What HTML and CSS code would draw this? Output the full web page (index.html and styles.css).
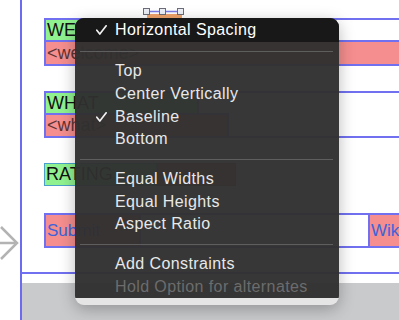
FILE: index.html
```html
<!DOCTYPE html>
<html>
<head>
<meta charset="utf-8">
<link rel="stylesheet" href="styles.css">
</head>
<body>
<div class="stage">
  <div class="gutter">
    <svg class="arrow" width="20" height="46" viewBox="0 0 20 46">
      <path d="M0 23 H15" />
      <path d="M1 7 L17 23 L1 39" />
    </svg>
  </div>
  <div class="canvas">
    <div class="topband">
      <svg class="handles" width="44" height="18" viewBox="0 0 44 18">
        <rect x="4" y="14" width="35" height="4" fill="#f2a46c"/>
        <path d="M6 11.5 H35" stroke="#7b7be6" stroke-width="1.5"/>
        <rect x="0.5" y="8.5" width="6" height="6" fill="#eef0f8" stroke="#6c6c78"/>
        <rect x="16.5" y="8.5" width="6" height="6" fill="#eef0f8" stroke="#6c6c78"/>
        <rect x="34.5" y="8.5" width="6" height="6" fill="#eef0f8" stroke="#6c6c78"/>
      </svg>
    </div>
    <div class="stack s1">
      <div class="lbl green w1">WE</div>
      <div class="lbl pink full">&lt;welcome&gt;</div>
    </div>
    <div class="stack s2">
      <div class="lbl green w2">WHAT</div>
      <div class="lbl pink w3">&lt;what&gt;</div>
    </div>
    <div class="rating">
      <div class="lbl green rt">RATING</div>
      <div class="lbl darkpink"></div>
    </div>
    <div class="buttons">
      <div class="btn sub">Submit</div>
      <div class="btn wik">Wik</div>
    </div>
    <div class="bottomline"></div>
    <div class="graybar"></div>
  </div>
</div>

<div class="menu">
  <div class="menu-body">
    <div class="item hl"><span class="check"><svg width="11" height="10" viewBox="0 0 11 10"><path d="M0.8 5.2 L3.8 9 L10.2 0.8"/></svg></span><span>Horizontal Spacing</span></div>
    <div class="sep first"></div>
    <div class="item"><span class="check"></span><span>Top</span></div>
    <div class="item"><span class="check"></span><span>Center Vertically</span></div>
    <div class="item"><span class="check"><svg width="11" height="10" viewBox="0 0 11 10"><path d="M0.8 5.2 L3.8 9 L10.2 0.8"/></svg></span><span>Baseline</span></div>
    <div class="item"><span class="check"></span><span>Bottom</span></div>
    <div class="sep"></div>
    <div class="item"><span class="check"></span><span>Equal Widths</span></div>
    <div class="item"><span class="check"></span><span>Equal Heights</span></div>
    <div class="item"><span class="check"></span><span>Aspect Ratio</span></div>
    <div class="sep"></div>
    <div class="item"><span class="check"></span><span>Add Constraints</span></div>
    <div class="item dim"><span class="check"></span><span>Hold Option for alternates</span></div>
  </div>
  <div class="rim"></div>
</div>
</body>
</html>
```

FILE: styles.css
```css
html, body {
  margin: 0;
  padding: 0;
}
body {
  width: 399px;
  height: 320px;
  overflow: hidden;
  background: #ffffff;
  font-family: "Liberation Sans", Arial, sans-serif;
  position: relative;
}
.stage {
  display: flex;
  width: 399px;
  height: 320px;
}
.gutter {
  width: 20px;
  flex: none;
  display: flex;
  flex-direction: column;
}
.arrow {
  margin-top: 220px;
  fill: none;
  stroke: #b3b3b3;
  stroke-width: 2.5;
}
.canvas {
  flex: 1;
  border-left: 2px solid #6b6bf0;
  display: flex;
  flex-direction: column;
  overflow: hidden;
}
.topband {
  height: 18px;
  flex: none;
}
.handles {
  display: block;
  margin-left: 121px;
}
.stack {
  margin-left: 22px;
  border-top: 2px solid #7070f0;
  border-bottom: 2px solid #7070f0;
  border-left: 2px solid #7070f0;
  display: flex;
  flex-direction: column;
  flex: none;
}
.s2 {
  margin-top: 25px;
}
.lbl {
  font-size: 18px;
  line-height: 20px;
  padding-left: 1px;
  white-space: nowrap;
  overflow: hidden;
  color: #111;
}
.green {
  background: #8ff28f;
  height: 20px;
}
.pink {
  background: #f58e8e;
  height: 22px;
  line-height: 22px;
  color: #5e3434;
  border-top: 2px solid #7070f0;
}
.w1 { width: 150px; border-right: 2px solid #7070f0; }
.full { width: auto; }
.w2 { width: 150px; border-right: 2px solid #7070f0; }
.w3 { width: 180px; height: 21px; line-height: 21px; border-right: 2px solid #7070f0; }
.rating {
  margin-top: 25px;
  margin-left: 22px;
  display: flex;
  flex: none;
}
.rt {
  width: 110px;
  height: 21px;
  line-height: 21px;
  border: 1px solid #4aa0c8;
}
.darkpink {
  width: 76px;
  height: 21px;
  background: #e27a7a;
  border: 1px solid #c06060;
}
.buttons {
  margin-top: 27px;
  margin-left: 22px;
  height: 31px;
  border-top: 2px solid #7070f0;
  border-bottom: 2px solid #7070f0;
  display: flex;
  justify-content: space-between;
  flex: none;
}
.btn {
  background: #f58e8e;
  color: #3c63dc;
  font-size: 17px;
  line-height: 31px;
  padding-left: 1px;
  white-space: nowrap;
  overflow: hidden;
}
.sub {
  width: 92px;
  border-left: 2px solid #7070f0;
  border-right: 2px solid #7070f0;
}
.wik {
  width: 28px;
  border-left: 2px solid #7070f0;
}
.bottomline {
  margin-top: 24px;
  height: 2px;
  background: #7070f0;
  flex: none;
}
.graybar {
  margin-top: 9px;
  flex: 1;
  background: #c9cacc;
}

/* context menu overlay */
.menu {
  position: absolute;
  left: 75px;
  top: 18px;
  width: 264px;
  border-radius: 9px;
  overflow: hidden;
  box-shadow: 0 4px 16px rgba(0, 0, 0, 0.28);
}
.menu-body {
  background: rgba(48, 48, 48, 0.965);
  display: flex;
  flex-direction: column;
}
.rim {
  height: 7px;
  background: #e5e5e5;
}
.item {
  height: 22.67px;
  display: flex;
  align-items: center;
  padding-left: 21px;
  font-size: 16px;
  letter-spacing: 0.4px;
  color: #e8e8e8;
  white-space: nowrap;
}
.item.hl {
  height: 24px;
  background: #181818;
  color: #ffffff;
}
.item.dim {
  color: #6c6c6c;
}
.check {
  width: 11px;
  margin-right: 8px;
  display: flex;
  align-items: center;
}
.check svg {
  display: block;
  fill: none;
  stroke: #f0f0f0;
  stroke-width: 1.7;
  stroke-linecap: round;
  stroke-linejoin: round;
}
.sep {
  height: 17px;
  display: flex;
  align-items: center;
  padding: 0 6px 0 5px;
}
.sep.first {
  height: 18px;
}
.sep::before {
  content: "";
  display: block;
  flex: 1;
  height: 1px;
  background: #5e5e5e;
}
```
